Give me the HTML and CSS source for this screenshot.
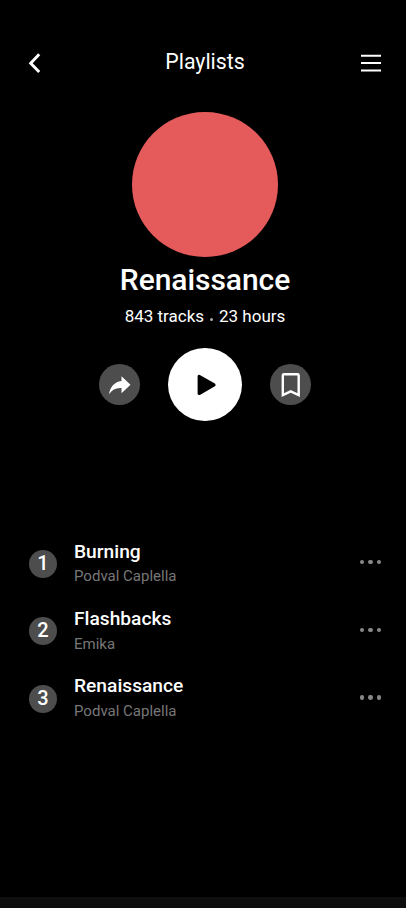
FILE: index.html
```html
<!DOCTYPE html>
<html lang="en">
<head>
<meta charset="utf-8">
<title>Playlists</title>
<link rel="stylesheet" href="styles.css">
</head>
<body>
<div class="screen">
  <header class="bar">
    <svg class="bar-icon" width="24" height="24" viewBox="0 0 24 24"><path d="M17.200 3.300 8.700 12.300l8.500 8.700" fill="none" stroke="#fff" stroke-width="2.900"/></svg>
    <h1 class="bar-title">Playlists</h1>
    <svg class="bar-icon" width="24" height="24" viewBox="0 0 24 24"><path d="M2 4.700h20M2 12h20M2 19.500h20" fill="none" stroke="#fff" stroke-width="2.100"/></svg>
  </header>
  <section class="hero">
    <div class="cover"></div>
    <h2 class="name">Renaissance</h2>
    <p class="meta"><span>843 tracks</span><i class="sep"></i><span>23 hours</span></p>
    <div class="actions">
      <button class="round" aria-label="Share"><svg width="24" height="24" viewBox="0 0 24 24"><path d="M13.500 3.200 22.500 11.700 13.500 20.200v-5.100C8 14.700 4.100 16.700 1.100 21.300 1.900 14.600 5.800 9 13.500 8z" fill="#fff"/></svg></button>
      <button class="play" aria-label="Play"><svg width="24" height="24" viewBox="0 0 24 24"><path d="M6.100 3.200v17.400l15-8.700z" fill="#000" stroke="#000" stroke-width="3" stroke-linejoin="round"/></svg></button>
      <button class="round" aria-label="Save"><svg width="24" height="26" viewBox="0 0 24 26"><path d="M3.800 23V3.400a1.200 1.200 0 0 1 1.200-1.200h13.500a1.200 1.200 0 0 1 1.200 1.200V23l-8-3.700z" fill="none" stroke="#fff" stroke-width="2.400"/></svg></button>
    </div>
  </section>
  <ol class="tracks">
    <li class="track"><span class="num">1</span><div class="info"><span class="song">Burning</span><span class="artist">Podval Caplella</span></div><span class="more"><i></i><i></i><i></i></span></li>
    <li class="track"><span class="num">2</span><div class="info"><span class="song">Flashbacks</span><span class="artist">Emika</span></div><span class="more"><i></i><i></i><i></i></span></li>
    <li class="track"><span class="num">3</span><div class="info"><span class="song">Renaissance</span><span class="artist">Podval Caplella</span></div><span class="more"><i></i><i></i><i></i></span></li>
  </ol>
  <footer class="nav"></footer>
</div>
</body>
</html>
```
FILE: styles.css
```css
* { box-sizing: border-box; margin: 0; padding: 0; }
body { background: #000; color: #fff; font-family: Roboto, sans-serif; }
.screen { width: 406px; height: 908px; display: flex; flex-direction: column; overflow: hidden; }
.bar { height: 64px; margin-top: 30px; padding: 0 23px 0 22px; display: flex; align-items: center; justify-content: space-between; }
.bar-icon { display: block; position: relative; top: 1px; }
.bar-title { font-size: 21.300px; font-weight: 400; line-height: 26px; padding-left: 5px; }
.hero { display: flex; flex-direction: column; align-items: center; width: 410px; padding-top: 18px; }
.cover { width: 145.400px; height: 145px; border-radius: 50%; background: #e55a5b; }
.name { font-size: 30px; font-weight: 500; line-height: 36px; margin-top: 5px; letter-spacing: -0.050px; }
.meta { display: flex; font-size: 17px; line-height: 20px; margin-top: 8px; }
.sep { width: 3px; height: 3px; border-radius: 50%; background: #aaa; margin: 12px 6px 0; }
.actions { display: flex; align-items: center; gap: 28px; height: 74px; margin-top: 21.500px; }
.actions button { border: 0; border-radius: 50%; display: flex; align-items: center; justify-content: center; }
.round { width: 41px; height: 40.600px; background: #4d4d4d; }
.play { width: 74px; height: 73.600px; background: #fff; }
.tracks { list-style: none; margin-top: 112.500px; padding: 0 25px 0 29px; }
.track { height: 67.200px; display: flex; align-items: flex-start; }
.num { width: 28px; height: 28px; border-radius: 50%; background: #4d4d4d; margin-top: 16.200px; font-size: 20px; font-weight: 500; line-height: 26px; text-align: center; }
.info { display: flex; flex-direction: column; margin: 6px 0 0 17px; }
.song { font-size: 19.200px; font-weight: 500; line-height: 24px; }
.artist { font-size: 15px; line-height: 20px; color: #777; margin-top: 2.400px; }
.more { margin: 26.200px 0 0 auto; display: flex; gap: 4.200px; }
.more i { width: 4.300px; height: 4.300px; border-radius: 50%; background: #888; }
.track + .track .more { margin-top: 27px; }
.nav { height: 11px; margin-top: auto; background: #0e0e0e; }
```
